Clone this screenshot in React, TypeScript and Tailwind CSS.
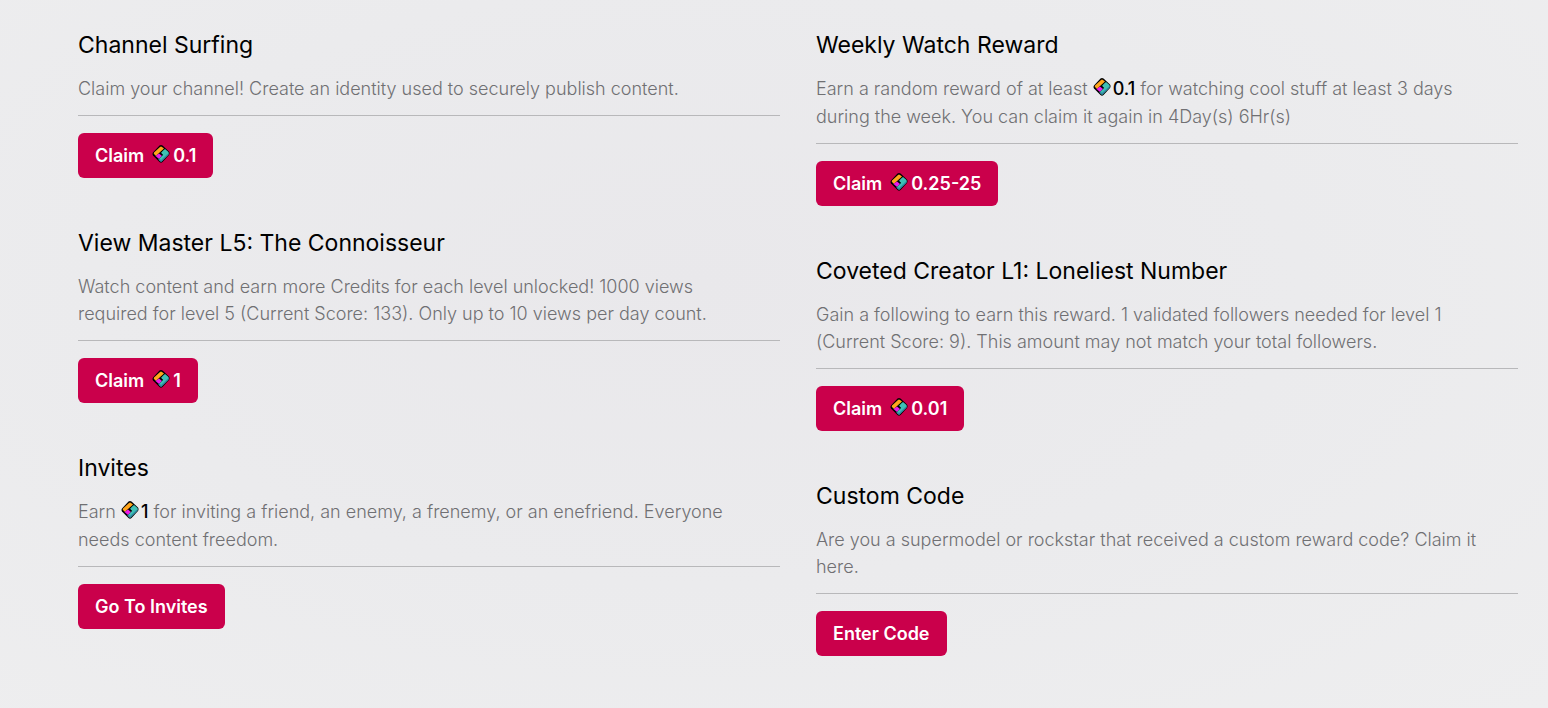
import type { ReactNode } from "react";

function CreditIcon({ onButton = false }: { onButton?: boolean }) {
  return (
    <svg viewBox="0 0 36 36" aria-hidden="true" className={onButton ? "mr-[3px] inline-block size-[18px] align-[-1px]" : "mr-[2px] inline-block size-[18px] align-[-1px]"}>
      <path d="M15 1 Q18 -1 21 1 L34 13 Q36 16 34 20 L21 34 Q18 37 15 34 L2 21 Q0 18 2 15Z" fill="#000" />
      <path d="M16 4 Q18 2 20 4 L24 7 L13 17 L8 22 L4 18 Q3 17 4 15Z" fill="#ffa51c" />
      <path d="M14 17 L20 22 L14 28 L7 22Z" fill="#ec1be8" />
      <path d="M26 8 L33 14 Q34 16 33 19 L19 33 Q18 34 16 32 L13 29 L22 20 L17 15 L20 13Z" fill="#3fc0b4" />
      <path d="M33 19 L19 33 Q18 34 16 32 L13 29 L15 27 L18 30 L33 16Z" fill="#2f8ba5" />
      <path d="M20 12 L17 16 L21 20" fill="none" stroke="#000" strokeWidth="2" />
    </svg>
  );
}

type Reward = { title: string; body: ReactNode; label: string; amount?: string };

const amount = (value: string) => (
  <span className="inline-block whitespace-nowrap font-medium leading-[28px] text-black"><CreditIcon />{value}</span>
);

const left: Reward[] = [
  { title: "Channel Surfing", body: "Claim your channel! Create an identity used to securely publish content.", label: "Claim", amount: "0.1" },
  { title: "View Master L5: The Connoisseur", body: "Watch content and earn more Credits for each level unlocked! 1000 views required for level 5 (Current Score: 133). Only up to 10 views per day count.", label: "Claim", amount: "1" },
  { title: "Invites", body: <>Earn {amount("1")} for inviting a friend, an enemy, a frenemy, or an enefriend. Everyone needs content freedom.</>, label: "Go To Invites" },
];
const right: Reward[] = [
  { title: "Weekly Watch Reward", body: <>Earn a random reward of at least {amount("0.1")} for watching cool stuff at least 3 days during the week. You can claim it again in 4Day(s) 6Hr(s)</>, label: "Claim", amount: "0.25-25" },
  { title: "Coveted Creator L1: Loneliest Number", body: "Gain a following to earn this reward. 1 validated followers needed for level 1 (Current Score: 9). This amount may not match your total followers.", label: "Claim", amount: "0.01" },
  { title: "Custom Code", body: "Are you a supermodel or rockstar that received a custom reward code? Claim it here.", label: "Enter Code" },
];

function RewardCard({ title, body, label, amount }: Reward) {
  return (
    <section>
      <h2 className="text-[23px] leading-[30px] text-black">{title}</h2>
      <p className="mt-[15px] border-b border-[#b8b8ba] pr-[30px] pb-[13px] text-[18px] font-light leading-[27px] text-[#707073]">{body}</p>
      <button type="button" className="mt-[17px] h-[45px] cursor-pointer rounded-[6px] bg-[#ca004b] px-[17px] text-[18px] font-semibold text-white">
        {label}{amount && <span className="ml-2"><CreditIcon onButton />{amount}</span>}
      </button>
    </section>
  );
}

export default function App() {
  return (
    <main className="grid min-h-screen grid-cols-2 items-start gap-9 bg-[radial-gradient(ellipse_at_45%_40%,#e9e8eb_0%,#ebebed_50%,#eeeeef_100%)] pt-[30px] pr-[30px] pb-[52px] pl-[78px] font-['Inter',sans-serif]">
      {[left, right].map((column, index) => (
        <div key={index} className="flex flex-col gap-[50px]">
          {column.map((reward) => <RewardCard key={reward.title} {...reward} />)}
        </div>
      ))}
    </main>
  );
}
